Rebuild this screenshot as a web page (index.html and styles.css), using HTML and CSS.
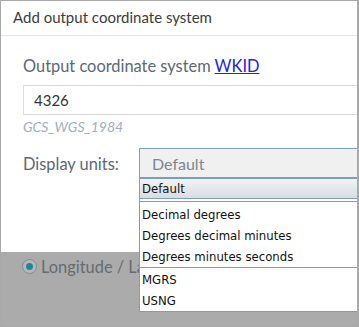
FILE: index.html
```html
<!DOCTYPE html>
<html>
<head>
    <title>Add output coordinate system</title>
    <link rel="stylesheet" href="styles.css">
</head>
<body>
    <div class="dialog">
        <div class="dialog-header">Add output coordinate system</div>

        <div class="dialog-body">
            <p class="field-label">Output coordinate system <a href="#" class="wkid-link">WKID</a></p>
            <input type="text" class="wkid-input" value="4326">
            <p class="wkid-name">GCS_WGS_1984</p>

            <div class="units-row">
                <span class="field-label units-label">Display units:</span>
                <div class="units-select">
                    <div class="select-box">Default</div>
                    <div class="select-menu">
                        <div class="menu-current">Default</div>
                        <div class="menu-group">
                            <div class="menu-item">Decimal degrees</div>
                            <div class="menu-item">Degrees decimal minutes</div>
                            <div class="menu-item">Degrees minutes seconds</div>
                        </div>
                        <div class="menu-group">
                            <div class="menu-item">MGRS</div>
                            <div class="menu-item">USNG</div>
                        </div>
                    </div>
                </div>
            </div>
        </div>

        <div class="dialog-lower">
            <label class="radio-row">
                <span class="radio"><span class="radio-dot"></span></span>
                <span class="radio-text">Longitude / Latitude</span>
            </label>
        </div>
    </div>
</body>
</html>
```

FILE: styles.css
```css
* {
    box-sizing: border-box;
}

body {
    margin: 0;
    background-color: #ffffff;
    font-family: 'Lato', 'Open Sans', sans-serif;
}

.dialog {
    width: 359px;
    height: 327px;
    border: 1px solid #a9a9a9;
    border-right-width: 2px;
    overflow: hidden;
    display: flex;
    flex-direction: column;
}

.dialog-header {
    height: 35px;
    padding: 7px 0 0 12px;
    border-bottom: 1px solid #e2e4e6;
    color: #3c3c3c;
    font-size: 15px;
}

.dialog-body {
    padding: 20px 0 0 22px;
    height: 216px;
}

.field-label {
    margin: 0;
    color: #5b6878;
    font-size: 16.4px;
    line-height: 20px;
}

.wkid-link {
    color: #2222ee;
}

.wkid-input {
    display: block;
    width: 340px;
    height: 30px;
    margin-top: 9px;
    padding: 0 10px;
    border: 1px solid #dcdcdc;
    color: #333333;
    font-family: 'Lato', sans-serif;
    font-size: 15px;
}

.wkid-name {
    margin: 3px 0 0 0;
    color: #a3adb9;
    font-size: 14px;
    font-style: italic;
    line-height: 18px;
}

.units-row {
    display: flex;
    align-items: center;
    margin-top: 12px;
}

.units-label {
    flex-shrink: 0;
    width: 116px;
}

.units-select {
    position: relative;
    flex-shrink: 0;
}

.select-box {
    width: 230px;
    height: 31px;
    padding: 5px 12px;
    border-top: 1px solid #7d9ec0;
    border-left: 1px solid #7d9ec0;
    border-bottom: 2px solid #7b9dbf;
    background-color: #f0f0f0;
    color: #7d8590;
    font-size: 16px;
}

/* menu opened over the dialog */
.select-menu {
    position: absolute;
    top: 31px;
    left: 0;
    width: 219px;
    border-left: 1px solid #7d9ec0;
    border-right: 1px solid #7d9ec0;
    border-bottom: 1px solid #7d9ec0;
    background-color: #ffffff;
    font-family: 'DejaVu Sans Condensed', 'DejaVu Sans', sans-serif;
    font-size: 13px;
    color: #111111;
}

.menu-current {
    height: 20px;
    padding: 2px 2px 0 2px;
    background: linear-gradient(#f1f2f4, #d9dde2);
    border-bottom: 1px solid #7d9ec0;
}

.menu-group {
    padding: 2px 0 0 0;
    border-top: 1px solid #7d9ec0;
    margin-top: 2px;
}

.menu-group + .menu-group {
    margin-top: 0;
    padding-top: 1px;
}

.menu-item {
    height: 21px;
    padding: 3px 2px 0 2px;
}

.dialog-lower {
    flex: 1;
    background-color: #ababab;
    padding: 5px 0 0 21px;
}

.radio-row {
    display: flex;
    align-items: center;
    gap: 4px;
    color: #666b70;
    font-size: 16.4px;
}

.radio {
    display: flex;
    align-items: center;
    justify-content: center;
    width: 15px;
    height: 15px;
    border: 1px solid #8a8a8a;
    border-radius: 50%;
    background-color: #b8b8b8;
}

.radio-dot {
    width: 7px;
    height: 7px;
    border-radius: 50%;
    background-color: #17899a;
}
```
